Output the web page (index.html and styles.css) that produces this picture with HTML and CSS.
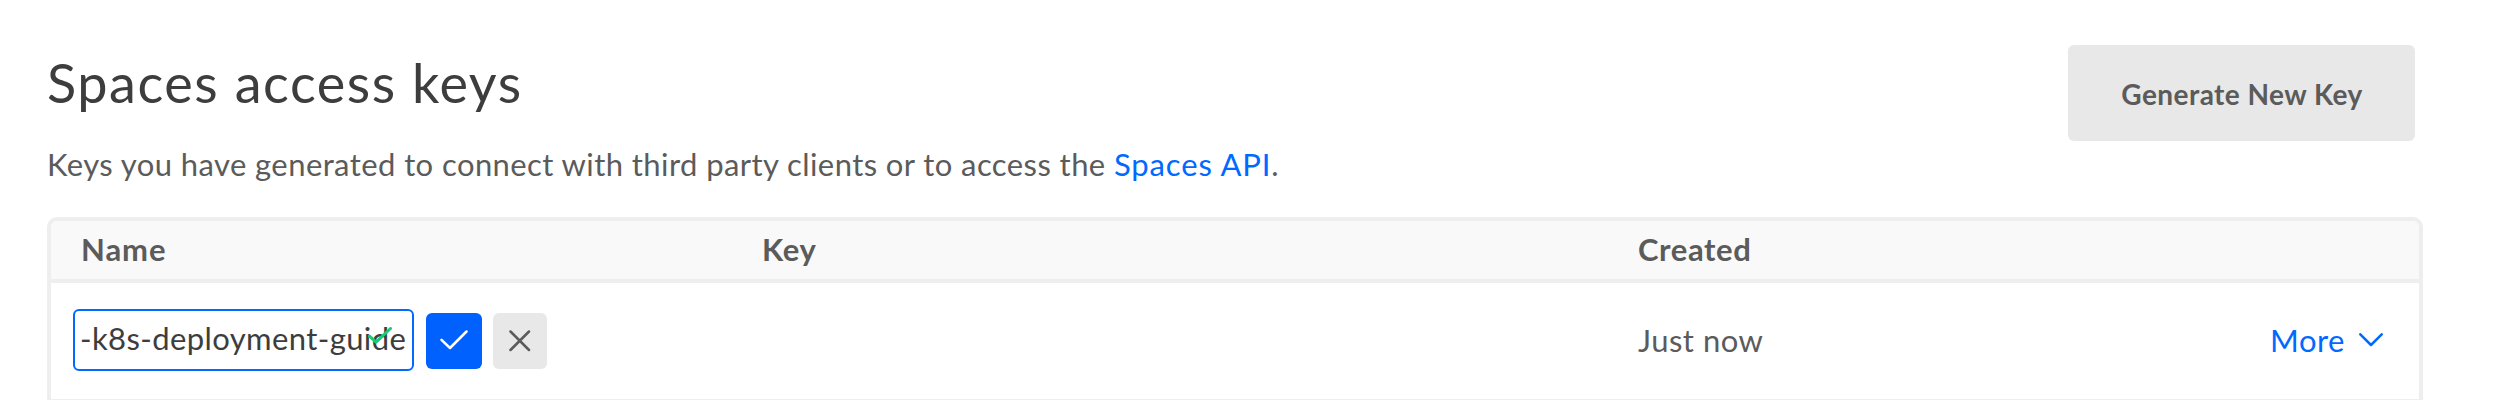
FILE: index.html
```html
<!DOCTYPE html>
<html lang="en">
<head>
<meta charset="utf-8">
<title>Spaces access keys</title>
<link rel="stylesheet" href="styles.css">
</head>
<body>
<main class="page">
  <header class="page-header">
    <div class="intro">
      <h1 class="title">Spaces access keys</h1>
      <p class="description">Keys you have generated to connect with third party clients or to access the <a class="link" href="#">Spaces API</a>.</p>
    </div>
    <button class="generate" type="button">Generate New Key</button>
  </header>
  <section class="table">
    <div class="row table-head">
      <span class="name-head">Name</span><span>Key</span><span>Created</span><span></span>
    </div>
    <div class="row table-row">
      <form class="edit">
        <div class="field"><span>-k8s-deployment-guide</span>
          <svg class="valid" width="24" height="17" viewBox="0 0 24 17"><path d="M1.5 9.2 8 15.2 22.5 1.5"/></svg>
        </div>
        <button class="confirm" type="button" aria-label="Save"><svg width="28" height="20" viewBox="0 0 28 20"><path d="M1.5 9.8 10 18 26.5 1.5"/></svg></button>
        <button class="cancel" type="button" aria-label="Cancel"><svg width="22" height="22" viewBox="0 0 22 22"><path d="M1.5 1.5 20 20M20 1.5 1.5 20"/></svg></button>
      </form>
      <span></span>
      <span class="created">Just now</span>
      <a class="more" href="#"><span>More</span><svg width="24" height="14" viewBox="0 0 24 14"><path d="M1.3 1.3 12 12 22.7 1.3"/></svg></a>
    </div>
  </section>
</main>
</body>
</html>
```
FILE: styles.css
```css
* { box-sizing: border-box; }
body {
  margin: 0;
  background: #fff;
  color: #5b5b5b;
  font-family: Lato, "Open Sans", sans-serif;
  font-size: 30px;
  line-height: 36px;
  letter-spacing: 0.95px;
}
.page { height: 400px; padding: 45px 73px 0 47px; overflow: hidden; }
.page-header { display: flex; justify-content: space-between; align-items: flex-start; height: 172px; padding-right: 8px; }
.title { margin: 7px 0 0; color: #3d3d3d; font-size: 54px; font-weight: 400; line-height: 62px; letter-spacing: 1.55px; }
.description { margin: 32px 0 0; font-size: 31px; letter-spacing: 0.42px; }
.description .link { letter-spacing: 0.85px; }
.link, .more { color: #0069ff; text-decoration: none; }
button { border: 0; border-radius: 6px; font: inherit; color: inherit; padding: 0; }
.generate { width: 347px; height: 96px; padding: 2px 0 0 1px; background: #e8e8e8; font-size: 28px; font-weight: 700; letter-spacing: 0.45px; }
.table { height: 240px; border: 4px solid #eee; border-radius: 10px; overflow: hidden; }
.row { display: grid; grid-template-columns: 680px 876px 1fr auto; align-items: center; padding: 0 36px 0 31px; }
.table-head { height: 62px; padding-bottom: 2px; background: #f9f9f9; border-bottom: 4px solid #eee; font-size: 31px; font-weight: 700; letter-spacing: 0.6px; }
.name-head { margin-left: -1px; letter-spacing: 0.9px; }
.table-row { height: 120px; border-bottom: 4px solid #eee; }
.edit { display: flex; align-items: center; margin-left: -9px; }
.field { position: relative; width: 341px; height: 62px; padding: 9px 5px; border: 2px solid #0069ff; border-radius: 6px; color: #3d3d3d; white-space: nowrap; font-size: 31px; letter-spacing: 0.4px; }
.edit .field { margin-top: -2px; }
.valid { position: absolute; top: 16px; right: 20px; }
svg { display: block; fill: none; stroke-linecap: round; stroke-linejoin: round; stroke: currentColor; stroke-width: 2.5; }
.valid { stroke: #15cd72; stroke-width: 3; }
.confirm, .cancel { display: flex; align-items: center; justify-content: center; height: 56px; }
.confirm { width: 56px; margin-left: 12px; padding-bottom: 3px; background: #0061ff; color: #fff; }
.cancel { width: 54px; margin-left: 11px; background: #e8e8e8; }
.created, .more { padding-bottom: 2px; font-size: 31px; letter-spacing: 0.5px; }
.more { display: flex; align-items: center; gap: 14px; }
```
